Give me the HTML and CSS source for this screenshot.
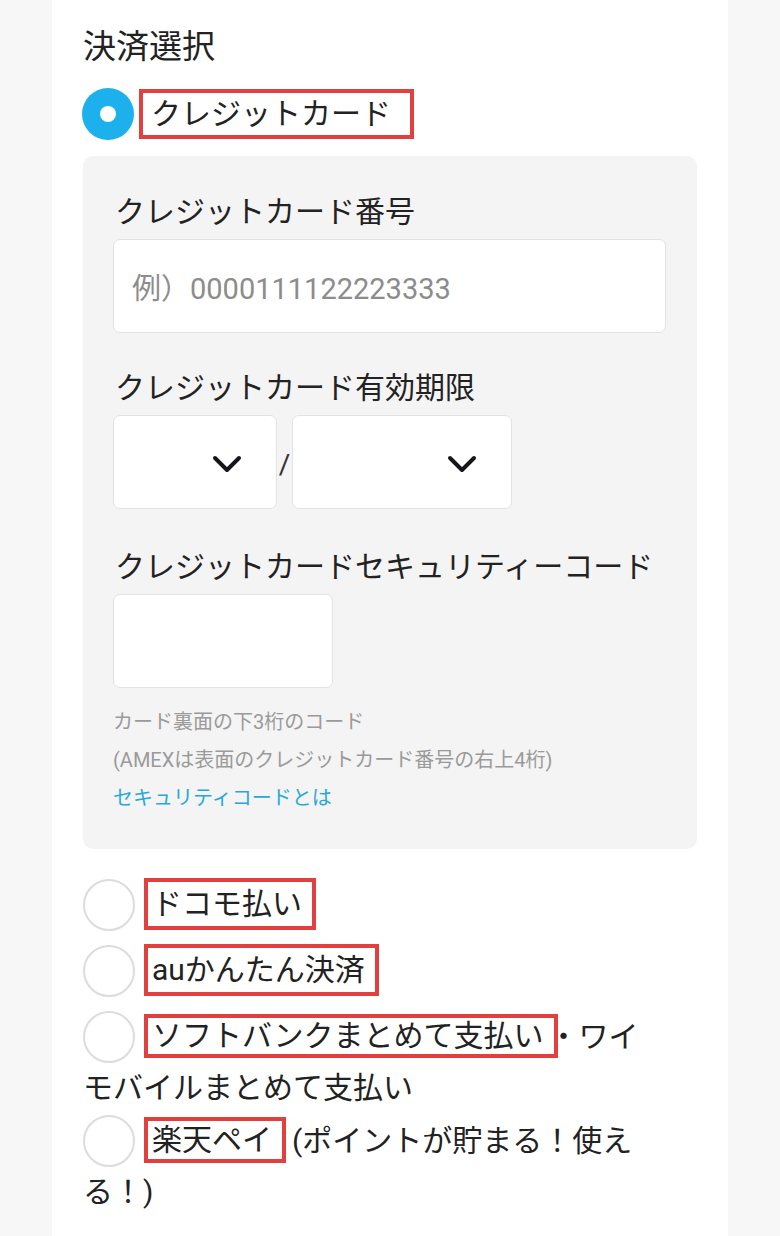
FILE: index.html
```html
<!DOCTYPE html>
<html lang="ja">
<head>
<meta charset="utf-8">
<title>決済選択</title>
<link rel="stylesheet" href="styles.css">
</head>
<body>
<main class="page">
  <h2 class="title">決済選択</h2>

  <div class="method-row">
    <span class="radio radio--checked"></span>
    <span class="mark">クレジットカード</span>
  </div>

  <section class="panel">
    <div class="field-label">クレジットカード番号</div>
    <div class="input input--wide"><span class="placeholder">例）0000111122223333</span></div>

    <div class="field-label">クレジットカード有効期限</div>
    <div class="expiry">
      <div class="select select--month">
        <svg class="chev" width="30" height="18" viewBox="0 0 30 18"><path d="M3 3 L15 15 L27 3" fill="none" stroke="#15151c" stroke-width="4" stroke-linecap="round" stroke-linejoin="round"/></svg>
      </div>
      <span class="slash">/</span>
      <div class="select select--year">
        <svg class="chev" width="30" height="18" viewBox="0 0 30 18"><path d="M3 3 L15 15 L27 3" fill="none" stroke="#15151c" stroke-width="4" stroke-linecap="round" stroke-linejoin="round"/></svg>
      </div>
    </div>

    <div class="field-label">クレジットカードセキュリティーコード</div>
    <div class="input input--short"></div>

    <div class="help">
      <p class="help-line">カード裏面の下3桁のコード</p>
      <p class="help-line">(AMEXは表面のクレジットカード番号の右上4桁)</p>
      <p class="help-line help-link">セキュリティコードとは</p>
    </div>
  </section>

  <div class="options">
    <div class="option"><span class="radio"></span><span class="mark mark--opt">ドコモ払い</span></div>
    <div class="option"><span class="radio"></span><span class="mark mark--opt">auかんたん決済</span></div>
    <div class="option"><span class="radio"></span><span class="mark mark--opt mark--sb">ソフトバンクまとめて支払い</span>・ワイモバイルまとめて支払い</div>
    <div class="option option--tight"><span class="radio"></span><span class="mark mark--opt mark--rk">楽天ペイ</span>(ポイントが貯まる！使える！)</div>
  </div>
</main>
</body>
</html>
```

FILE: styles.css
```css
* { box-sizing: border-box; }

html, body {
  margin: 0;
  padding: 0;
  background: #f7f7f7;
}

body {
  font-family: Roboto, "Noto Sans CJK JP", sans-serif;
  color: #222;
}

.page {
  width: 676px;
  margin-left: 52px;
  min-height: 1236px;
  background: #fff;
  padding: 24px 31px 0 31px;
}

.title {
  margin: 0;
  font-size: 33px;
  font-weight: 400;
  line-height: 46px;
  color: #222;
}

.method-row {
  display: flex;
  align-items: center;
  margin-top: 18px;
  height: 52px;
}

.radio {
  display: inline-block;
  width: 52px;
  height: 52px;
  border-radius: 50%;
  border: 2px solid #dcdcdc;
  background: #fff;
  vertical-align: middle;
  flex: none;
  position: relative;
  top: -2px;
}

.method-row .radio { top: 0; margin-left: -1px; }

.radio--checked {
  border: none;
  background: #1cb0ec;
}

.radio--checked::after {
  content: "";
  position: absolute;
  left: 18px;
  top: 18px;
  width: 16px;
  height: 16px;
  border-radius: 50%;
  background: #fff;
}

.mark {
  display: inline-block;
  border: 4px solid #e2403f;
  padding: 0 19px 0 8px;
  margin-left: 5px;
  height: 50px;
  line-height: 42px;
  font-size: 30px;
  color: #222;
}

.panel {
  margin-top: 16px;
  background: #f4f4f4;
  border-radius: 10px;
  padding: 36px 31px 32px 30px;
}

.field-label {
  font-size: 30px;
  line-height: 40px;
  margin: 0 0 7px 2px;
  color: #222;
}

.input + .field-label { margin-top: 35px; }
.expiry + .field-label { margin-top: 38px; }

.input {
  background: #fff;
  border: 1.5px solid #e3e3e3;
  border-radius: 7px;
  height: 94px;
  display: flex;
  align-items: center;
}

.input--wide { width: 553px; padding-left: 18px; }
.input--short { width: 220px; }

.placeholder {
  font-size: 29px;
  color: #8c8c8c;
}

.expiry {
  display: flex;
  align-items: center;
  margin-top: 7px;
}

.select {
  background: #fff;
  border: 1.5px solid #e3e3e3;
  border-radius: 7px;
  height: 94px;
  display: flex;
  align-items: center;
  justify-content: flex-end;
  padding-right: 34px;
}

.select--month { width: 164px; }
.select--year { width: 220px; }

.chev { display: block; margin-top: 4px; }

.slash {
  font-size: 28px;
  color: #333;
  width: 15px;
  text-align: center;
  margin-top: 4px;
}

.help { margin-top: 15px; }

.help-line {
  margin: 0;
  font-size: 20px;
  line-height: 38px;
  color: #9a9a9a;
}

.help-link { color: #27a9d8; }

.options {
  width: 580px;
  margin-top: 32px;
  padding-bottom: 20px;
}

.option {
  font-size: 30px;
  line-height: 46px;
  color: #222;
}

.option + .option { margin-top: 14px; }
.option.option--tight { margin-top: 6px; }

.mark--opt {
  margin-left: 9px;
  padding: 0 10px 0 4px;
  vertical-align: middle;
  height: 52px;
  line-height: 44px;
  position: relative;
  top: -3px;
}

.mark--sb { height: 44px; line-height: 36px; margin-right: -9px; }
.mark--rk { height: 46px; line-height: 38px; margin-right: 6px; }
```
